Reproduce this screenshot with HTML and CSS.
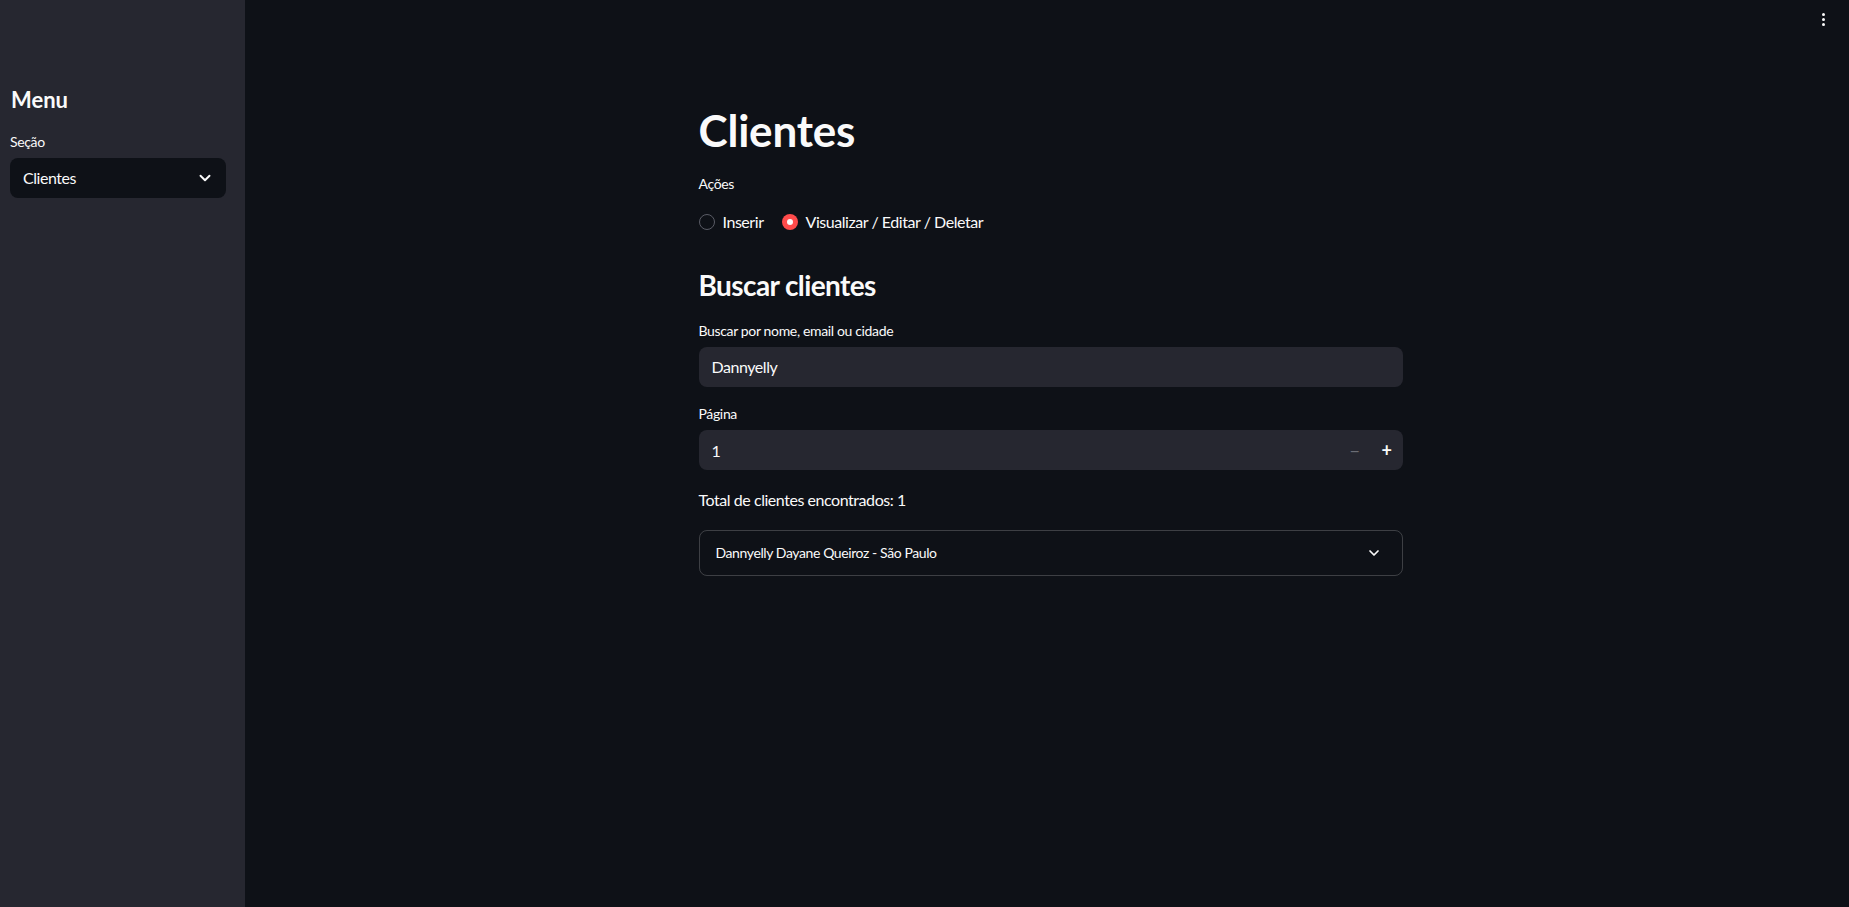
FILE: index.html
```html
<!DOCTYPE html>
<html lang="pt">
<head>
<meta charset="utf-8">
<title>Clientes</title>
<link rel="stylesheet" href="styles.css">
</head>
<body>
<aside class="sidebar">
  <h2 class="side-title">Menu</h2>
  <div class="field">
    <label class="label">Seção</label>
    <div class="select">
      <span>Clientes</span>
      <svg class="chev" viewBox="0 0 24 24" width="18" height="18"><path d="M6 9l6 6 6-6" fill="none" stroke="#fafafa" stroke-width="2.6" stroke-linecap="round" stroke-linejoin="round"/></svg>
    </div>
  </div>
</aside>
<main class="main">
  <header class="topbar">
    <div class="kebab"><span></span><span></span><span></span></div>
  </header>
  <div class="block">
    <h1 class="title">Clientes</h1>
    <div class="field">
      <label class="label">Ações</label>
      <div class="radios">
        <div class="radio"><span class="dot"></span>Inserir</div>
        <div class="radio"><span class="dot on"></span>Visualizar / Editar / Deletar</div>
      </div>
    </div>
    <h3 class="subtitle">Buscar clientes</h3>
    <div class="field">
      <label class="label">Buscar por nome, email ou cidade</label>
      <div class="input">Dannyelly</div>
    </div>
    <div class="field field-num">
      <label class="label">Página</label>
      <div class="input number">
        <span class="num">1</span>
        <span class="step minus">&minus;</span>
        <span class="step plus">+</span>
      </div>
    </div>
    <p class="text">Total de clientes encontrados: 1</p>
    <div class="expander">
      <span>Dannyelly Dayane Queiroz - São Paulo</span>
      <svg viewBox="0 0 24 24" width="16" height="16"><path d="M6 9l6 6 6-6" fill="none" stroke="#fafafa" stroke-width="2.6" stroke-linecap="round" stroke-linejoin="round"/></svg>
    </div>
  </div>
</main>
</body>
</html>
```
FILE: styles.css
```css
* { box-sizing: border-box; }
html, body { margin: 0; height: 100%; }
body {
  display: flex;
  background: #0e1117;
  color: #fafafa;
  font-family: "Source Sans Pro", "Lato", "Noto Sans", sans-serif;
  font-size: 16px;
  letter-spacing: -0.45px;
  overflow: hidden;
}
.sidebar {
  width: 245px;
  flex: none;
  background: #262730;
  padding: 87px 19px 0 10px;
  display: flex;
  flex-direction: column;
  gap: 19px;
}
.side-title {
  margin: 0 0 0 1px;
  font-size: 22px;
  font-weight: 700;
  line-height: 1.2;
  letter-spacing: 0;
}
.field { display: flex; flex-direction: column; gap: 6px; }
.field-num { gap: 7px; }
.label { font-size: 14px; line-height: 1.4; letter-spacing: -0.35px; }
.select {
  height: 40px;
  background: #0e1117;
  border-radius: 8px;
  display: flex;
  align-items: center;
  justify-content: space-between;
  padding: 0 12px 0 13px;
  font-size: 16px;
}
.main {
  flex: 1;
  position: relative;
  padding-left: 7px;
}
.topbar {
  position: absolute;
  top: 0; right: 0; left: 0;
  height: 40px;
}
.kebab {
  position: absolute;
  top: 13px;
  right: 24px;
  display: flex;
  flex-direction: column;
  gap: 2px;
}
.kebab span { width: 3px; height: 3px; background: #fafafa; border-radius: 50%; }
.block {
  width: 704px;
  margin: 0 auto;
  padding-top: 104px;
  display: flex;
  flex-direction: column;
  gap: 17px;
}
.title {
  margin: 0;
  font-size: 44px;
  font-weight: 700;
  line-height: 1.2;
  letter-spacing: -0.2px;
}
.radios { display: flex; gap: 18px; align-items: center; margin-top: 11px; }
.radio { display: flex; align-items: center; gap: 8px; font-size: 16px; line-height: 24px; }
.dot {
  width: 16px; height: 16px; border-radius: 50%;
  border: 1px solid #5a5c66;
  background: #0e1117;
}
.dot.on {
  border: none;
  background: #ff4b4b;
  position: relative;
}
.dot.on::after {
  content: "";
  position: absolute;
  left: 5px; top: 5px;
  width: 6px; height: 6px; border-radius: 50%;
  background: #fafafa;
}
.subtitle {
  margin: 18px 0 1px;
  font-size: 28px;
  font-weight: 700;
  line-height: 1.2;
  letter-spacing: -0.6px;
}
.input {
  height: 40px;
  background: #262730;
  border-radius: 8px;
  display: flex;
  align-items: center;
  padding: 0 13px;
  font-size: 16px;
}
.number { padding-right: 0; }
.num { flex: 1; }
.step {
  width: 32px;
  text-align: center;
  font-size: 18px;
  font-weight: 700;
}
.minus { color: #6b6d75; font-weight: 400; }
.text { margin: 0; font-size: 16px; line-height: 1.6; }
.expander {
  height: 46px;
  border: 1px solid rgba(250,250,250,0.2);
  border-radius: 8px;
  display: flex;
  align-items: center;
  justify-content: space-between;
  padding: 0 20px 0 16px;
  font-size: 14px;
  letter-spacing: -0.4px;
}
```
